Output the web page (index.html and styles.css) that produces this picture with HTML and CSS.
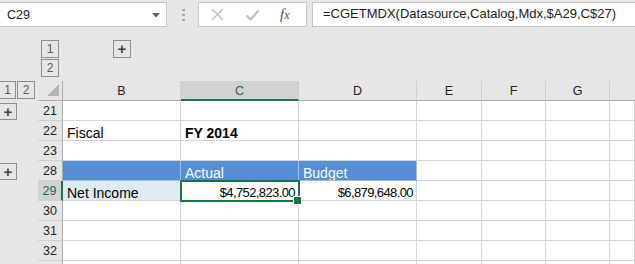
FILE: index.html
```html
<!DOCTYPE html>
<html lang="en">
<head>
    <meta charset="UTF-8">
    <title>Sheet</title>
    <link rel="stylesheet" href="styles.css">
</head>
<body>
    <div class="toolbar">
        <div class="namebox">
            <span>C29</span>
            <svg class="dropdown" width="8" height="5" viewBox="0 0 8 5"><polygon points="0,0 8,0 4,4.5" fill="#5f5f5f"/></svg>
        </div>
        <div class="grip">
            <svg width="3" height="12" viewBox="0 0 3 12"><rect x="0" y="0" width="3" height="2" fill="#a8a8a8"/><rect x="0" y="5" width="3" height="2" fill="#a8a8a8"/><rect x="0" y="10" width="3" height="2" fill="#a8a8a8"/></svg>
        </div>
        <div class="fx-buttons">
            <svg width="13" height="13" viewBox="0 0 13 13"><path d="M1 1 L12 12 M12 1 L1 12" stroke="#c2c2c2" stroke-width="1.6" fill="none"/></svg>
            <svg width="15" height="12" viewBox="0 0 15 12"><path d="M1.5 6.5 L5.5 10.5 L13.5 1.5" stroke="#c2c2c2" stroke-width="2.2" fill="none"/></svg>
            <span class="fx">f<span>x</span></span>
        </div>
        <div class="formula">=CGETMDX(Datasource,Catalog,Mdx,$A29,C$27)</div>
    </div>

    <div class="col-outline">
        <div class="level-stack">
            <div class="outline-btn">1</div>
            <div class="outline-btn">2</div>
        </div>
        <div class="outline-btn plus">+</div>
    </div>

    <div class="sheet">
        <!-- header row -->
        <div class="gutter levels">
            <div class="outline-btn">1</div>
            <div class="outline-btn">2</div>
        </div>
        <div class="corner">
            <svg width="12" height="12" viewBox="0 0 12 12"><polygon points="12,0 12,12 0,12" fill="#b4b4b4"/></svg>
        </div>
        <div class="col-head">B</div>
        <div class="col-head active">C</div>
        <div class="col-head">D</div>
        <div class="col-head">E</div>
        <div class="col-head">F</div>
        <div class="col-head">G</div>
        <div class="col-head last"></div>

        <!-- 21 -->
        <div class="gutter"><div class="outline-btn plus small">+</div></div>
        <div class="row-head">21</div>
        <div class="cell"></div><div class="cell"></div><div class="cell"></div><div class="cell"></div><div class="cell"></div><div class="cell"></div><div class="cell"></div>

        <!-- 22 -->
        <div class="gutter"></div>
        <div class="row-head">22</div>
        <div class="cell">Fiscal</div><div class="cell bold">FY 2014</div><div class="cell"></div><div class="cell"></div><div class="cell"></div><div class="cell"></div><div class="cell"></div>

        <!-- 23 -->
        <div class="gutter"></div>
        <div class="row-head">23</div>
        <div class="cell"></div><div class="cell"></div><div class="cell"></div><div class="cell"></div><div class="cell"></div><div class="cell"></div><div class="cell"></div>

        <!-- 28 -->
        <div class="gutter"><div class="outline-btn plus small">+</div></div>
        <div class="row-head">28</div>
        <div class="cell band"></div><div class="cell band">Actual</div><div class="cell band">Budget</div><div class="cell"></div><div class="cell"></div><div class="cell"></div><div class="cell"></div>

        <!-- 29 -->
        <div class="gutter"></div>
        <div class="row-head active">29</div>
        <div class="cell label">Net Income</div><div class="cell num selected">$4,752,823.00</div><div class="cell num">$6,879,648.00</div><div class="cell"></div><div class="cell"></div><div class="cell"></div><div class="cell"></div>

        <!-- 30 -->
        <div class="gutter"></div>
        <div class="row-head">30</div>
        <div class="cell"></div><div class="cell"></div><div class="cell"></div><div class="cell"></div><div class="cell"></div><div class="cell"></div><div class="cell"></div>

        <!-- 31 -->
        <div class="gutter"></div>
        <div class="row-head">31</div>
        <div class="cell"></div><div class="cell"></div><div class="cell"></div><div class="cell"></div><div class="cell"></div><div class="cell"></div><div class="cell"></div>

        <!-- 32 -->
        <div class="gutter"></div>
        <div class="row-head">32</div>
        <div class="cell"></div><div class="cell"></div><div class="cell"></div><div class="cell"></div><div class="cell"></div><div class="cell"></div><div class="cell"></div>

        <!-- 33, apenas visible -->
        <div class="gutter"></div>
        <div class="row-head"></div>
        <div class="cell"></div><div class="cell"></div><div class="cell"></div><div class="cell"></div><div class="cell"></div><div class="cell"></div><div class="cell"></div>
    </div>
</body>
</html>
```

FILE: styles.css
```css
* {
    box-sizing: border-box;
}

body {
    margin: 0;
    background-color: #e6e6e6;
    font-family: 'Liberation Sans', Arial, sans-serif;
    width: 635px;
    height: 264px;
    overflow: hidden;
}

/* Barra de formulas */
.toolbar {
    display: flex;
    height: 30px;
    padding-top: 2px;
}

.namebox {
    width: 167px;
    height: 25px;
    background-color: #ffffff;
    border: 1px solid #c6c6c6;
    border-left: none;
    display: flex;
    align-items: center;
    justify-content: space-between;
    padding: 0 6px 0 7px;
    font-size: 12.5px;
    color: #222;
}

.dropdown {
    margin-top: 1px;
}

.grip {
    width: 31px;
    display: flex;
    justify-content: center;
    align-items: center;
    height: 25px;
    padding-left: 1px;
}

.fx-buttons {
    width: 109px;
    height: 25px;
    background-color: #ffffff;
    border: 1px solid #c6c6c6;
    display: flex;
    align-items: center;
    padding-left: 12px;
    gap: 21px;
}

.fx {
    font-family: 'Liberation Serif', serif;
    font-style: italic;
    font-size: 15px;
    color: #555;
    margin-left: -1px;
}

.fx span {
    font-size: 12px;
}

.formula {
    flex: 1;
    margin-left: 5px;
    height: 25px;
    background-color: #ffffff;
    border: 1px solid #c6c6c6;
    border-right: none;
    padding-left: 10px;
    font-size: 13px;
    line-height: 22px;
    color: #222;
    white-space: nowrap;
}

/* Esquema de columnas */
.col-outline {
    height: 51px;
    padding: 10px 0 0 41px;
    display: flex;
    align-items: flex-start;
    gap: 54px;
}

.level-stack {
    display: flex;
    flex-direction: column;
    gap: 1px;
}

.outline-btn {
    width: 18px;
    height: 18px;
    border: 1px solid #8e8e8e;
    color: #5a5a5a;
    font-size: 12px;
    line-height: 16px;
    text-align: center;
}

.outline-btn.plus {
    font-weight: bold;
    font-size: 15px;
    color: #444;
}

.outline-btn.small {
    width: 17px;
    height: 17px;
    line-height: 15px;
    border-left: none;
}

/* Hoja */
.sheet {
    display: grid;
    grid-template-columns: 38px 25px 118px 118px 118px 65px 64px 64px 1fr;
    grid-template-rows: repeat(10, 20px);
    height: 183px;
    overflow: hidden;
}

.gutter {
    display: flex;
    align-items: center;
}

.gutter.levels {
    align-items: flex-start;
    gap: 1px;
}

.gutter.levels .outline-btn:first-child {
    width: 16px;
    border-left: none;
}

.corner {
    border-bottom: 1px solid #ababab;
    border-right: 1px solid #ababab;
    display: flex;
    justify-content: flex-end;
    align-items: flex-end;
    padding: 0 3px 4px 0;
}

.col-head {
    border-bottom: 1px solid #ababab;
    border-right: 1px solid #d0d0d0;
    text-align: center;
    font-size: 12.5px;
    line-height: 19px;
    color: #222;
    padding-top: 1px;
}

.col-head.active {
    background-color: #d2d2d2;
    border-bottom: 2px solid #217346;
    color: #1e6b44;
}

.col-head.last {
    border-right: none;
}

.row-head {
    border-right: 1px solid #ababab;
    border-bottom: 1px solid #d0d0d0;
    text-align: center;
    font-size: 12.5px;
    line-height: 19px;
    padding-top: 1px;
    color: #222;
}

.row-head.active {
    background-color: #d2d2d2;
    border-right: 2px solid #217346;
    color: #1e6b44;
}

.cell {
    background-color: #ffffff;
    border-right: 1px solid #d4d4d4;
    border-bottom: 1px solid #d4d4d4;
    font-size: 14px;
    line-height: 20px;
    height: 20px;
    padding: 2px 3px 0 4px;
    white-space: nowrap;
    overflow: hidden;
    color: #000;
}

.cell.bold {
    font-weight: bold;
}

.cell.band {
    background-color: #558ed5;
    color: #ffffff;
    border-right-color: #9fbde6;
    border-bottom-color: #9fbde6;
}

.cell.label {
    background-color: #ddebf7;
}

.cell.num {
    text-align: right;
    font-size: 13px;
    letter-spacing: -0.6px;
    padding-right: 3px;
}

.cell.selected {
    position: relative;
    overflow: visible;
}

.cell.selected::before {
    content: '';
    position: absolute;
    top: -1px;
    left: -1px;
    right: -2px;
    bottom: -2px;
    border: 2px solid #217346;
}

.cell.selected::after {
    content: '';
    position: absolute;
    right: -4px;
    bottom: -5px;
    width: 7px;
    height: 7px;
    background-color: #217346;
    border: 1px solid #ffffff;
}
```
